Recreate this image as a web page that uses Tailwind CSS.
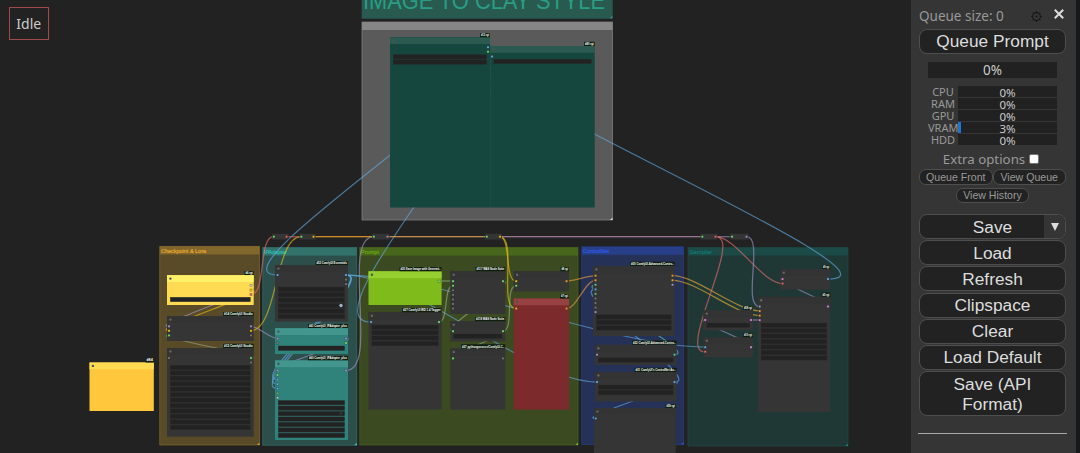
<!DOCTYPE html>
<html lang="en">
<head>
    <meta charset="UTF-8">
    <meta name="viewport" content="width=device-width, initial-scale=1.0">
    <title>ComfyUI</title>
    <script src="https://cdn.jsdelivr.net/npm/@tailwindcss/browser@4"></script>
</head>
<body class="flex w-[1080px] h-[453px] overflow-hidden bg-[#222222] font-['Noto_Sans',sans-serif]">
    <main class="relative w-[911px] h-[453px] shrink-0 overflow-hidden">
        <svg id="graph" class="block" width="911" height="453" viewBox="0 0 911 453" font-family="Liberation Sans, Arial, sans-serif"></svg>
        <div class="absolute left-[9px] top-[7px] w-[39.5px] h-[33px] border border-[#a04a4a] flex items-center justify-center text-[14px] leading-none text-[#cccccc]">Idle</div>
    </main>

    <aside class="w-[165px] h-[453px] shrink-0 bg-[#353535] pl-[7px] pr-[9px] flex flex-col items-center text-[#999999]">
        <div class="w-full h-[29px] shrink-0 flex items-center pt-[4px] pl-[1px]">
            <span class="text-[13.5px] leading-none whitespace-nowrap w-[112px]">Queue size: 0</span>
            <svg class="w-[11px] h-[11px] shrink-0" viewBox="0 0 11 11" fill="none" stroke="#161616">
                <circle cx="5.5" cy="5.5" r="3.9" stroke-width="1.1"/>
                <circle cx="5.5" cy="5.5" r="1" fill="#161616" stroke="none"/>
                <path d="M5.5 0v1.6M5.5 9.4V11M0 5.5h1.6M9.4 5.5H11M1.6 1.6l1.1 1.1M8.3 8.3l1.1 1.1M9.4 1.6L8.3 2.7M2.7 8.3L1.6 9.4" stroke-width="1"/>
            </svg>
            <svg class="w-[10px] h-[10px] shrink-0 ml-[12px] -mt-[5px]" viewBox="0 0 10 10" fill="none" stroke="#dddddd" stroke-width="2">
                <path d="M0.8 0.8L9.2 9.2M9.2 0.8L0.8 9.2"/>
            </svg>
        </div>
        <button class="w-[147px] h-[25px] shrink-0 rounded-lg border border-[#4e4e4e] bg-[#222222] text-[#dddddd] font-['Liberation_Sans',sans-serif] text-[17.3px] leading-none">Queue Prompt</button>

        <div class="mt-[8px] w-[129px] h-[16px] shrink-0 bg-[#212121] text-[#cccccc] text-[13.5px] leading-[17px] text-center">0%</div>

        <div class="mt-[8px] w-[129px] shrink-0 flex flex-col text-[11px] leading-[12px]">
            <div class="flex h-[12px]"><span class="w-[30px] text-center">CPU</span><span class="w-[99px] h-[11px] pt-[1px] bg-[#212121] text-[#cccccc] text-center text-[11.5px]">0%</span></div>
            <div class="flex h-[12px]"><span class="w-[30px] text-center">RAM</span><span class="w-[99px] h-[11px] pt-[1px] bg-[#212121] text-[#cccccc] text-center text-[11.5px]">0%</span></div>
            <div class="flex h-[12px]"><span class="w-[30px] text-center">GPU</span><span class="w-[99px] h-[11px] pt-[1px] bg-[#212121] text-[#cccccc] text-center text-[11.5px]">0%</span></div>
            <div class="flex h-[12px]"><span class="w-[30px] text-center">VRAM</span><span class="w-[99px] h-[11px] pt-[1px] bg-[#212121] bg-linear-to-r from-[#1976d2] from-[3px] to-[#212121] to-[3px] text-[#cccccc] text-center text-[11.5px]">3%</span></div>
            <div class="flex h-[12px]"><span class="w-[30px] text-center">HDD</span><span class="w-[99px] h-[11px] pt-[1px] bg-[#212121] text-[#cccccc] text-center text-[11.5px]">0%</span></div>
        </div>

        <label class="mt-[6px] mr-[3px] h-[16px] shrink-0 flex items-center gap-[4px] text-[13.3px] leading-none whitespace-nowrap">Extra options<span class="w-[10px] h-[10px] bg-white rounded-[2px] border border-[#777777] -mt-[3px]"></span></label>
        <div class="mt-[1px] w-[147px] shrink-0 flex flex-wrap justify-center gap-y-[3px] font-['Liberation_Sans',sans-serif] text-[10.6px] leading-none">
            <button class="w-[73.5px] h-[16px] rounded-[7px] border border-[#4e4e4e] bg-[#222222] whitespace-nowrap">Queue Front</button>
            <button class="w-[73.5px] h-[16px] rounded-[7px] border border-[#4e4e4e] bg-[#222222] whitespace-nowrap">View Queue</button>
            <button class="w-[73px] h-[15px] rounded-[7px] border border-[#4e4e4e] bg-[#222222] whitespace-nowrap">View History</button>
        </div>

        <div class="mt-[11px] w-[147px] shrink-0 flex flex-col gap-[1.2px] text-[#dddddd] font-['Liberation_Sans',sans-serif] text-[17.3px] leading-[20px]">
            <div class="h-[25px] flex rounded-lg border border-[#4e4e4e] bg-[#222222] overflow-hidden">
                <button class="flex-1 pl-[21px]">Save</button>
                <button class="w-[21px] bg-[#353535] flex items-center justify-center">
                    <svg class="w-[8px] h-[8px]" viewBox="0 0 8 8" fill="#dddddd"><path d="M0 0h8L4 8z"/></svg>
                </button>
            </div>
            <button class="h-[25px] rounded-lg border border-[#4e4e4e] bg-[#222222]">Load</button>
            <button class="h-[25px] rounded-lg border border-[#4e4e4e] bg-[#222222]">Refresh</button>
            <button class="h-[25px] rounded-lg border border-[#4e4e4e] bg-[#222222]">Clipspace</button>
            <button class="h-[25px] rounded-lg border border-[#4e4e4e] bg-[#222222]">Clear</button>
            <button class="h-[25px] rounded-lg border border-[#4e4e4e] bg-[#222222]">Load Default</button>
            <button class="h-[45px] rounded-lg border border-[#4e4e4e] bg-[#222222]">Save (API<br>Format)</button>
        </div>
        <hr class="mt-[17px] w-[149px] shrink-0 border-t-[1.5px] border-[#a8a8a8]">
    </aside>
    <div class="w-[4px] h-[453px] bg-[#15191b]"></div>

    <script>
        const B = '#64a9e0', G = '#6fdc6f', Y = '#e8c01a', O = '#eca042', P = '#a694cc', K = '#d58ad8', R = '#ea6d6d', N = '#77777f', T = '#58cfa0';

        // x, y, right, bottom, header bottom, body, header, title, title colour, title width, corner mark
        const groups = [
            [362, -10, 612.3, 18.3, -10, '#285a50', '#285a50', '', '', 0, '#2a9d84'],
            [362, 22, 612.5, 220, 30, '#5a5a5a', '#868686', '', '', 0, '#dddddd'],
            [159.8, 246.3, 259.5, 445, 254.5, '#5a4b28', '#82672c', 'Checkpoint & Lora', '#e3a730', 45, '#d8a030'],
            [262.8, 247.6, 356.8, 445.2, 255.6, '#2c4f4c', '#33716b', 'IPAdapter', '#2bbdab', 23, '#30d0c0'],
            [359.8, 247.6, 578, 445, 255.6, '#3b4a20', '#48661c', 'Prompt', '#68a812', 18, '#78c018'],
            [581.8, 246.8, 683.6, 444.6, 254.8, '#263158', '#273f88', 'ControlNet', '#3159e0', 26, '#3159e0'],
            [688, 247.6, 848, 446, 255.6, '#1f3836', '#1b4a47', 'Sampler', '#12786f', 23, '#12887f']
        ];

        const links = [
            [488, 47, 277.5, 275, B], [488, 47, 371, 322, B], [828, 279, 492, 56.5, B],
            [251, 294.5, 273.5, 236.7, R], [251, 330.5, 301, 236.7, Y], [251, 326.5, 277.5, 338.5, P],
            [251, 285.5, 169, 326.5, P], [251, 290, 169, 330.5, Y], [251, 358, 169, 335.5, '#9aa888'],
            [346, 370.5, 374, 236.7, P], [346, 338.5, 277.5, 370.5, P],
            [346, 275, 277.5, 379.5, B], [346, 275, 277.5, 384, B], [346, 275, 277.5, 388.5, B],
            [346, 275, 705, 347, B], [346, 275, 597, 382, B],
            [286.5, 236.7, 301, 236.7, R], [313.5, 236.7, 374, 236.7, '#f0a020'], [313.5, 236.7, 374, 236.7, '#e8a030'],
            [388, 236.7, 487, 236.7, '#f0a040'], [388, 236.7, 487, 236.7, '#d09a60'],
            [499.5, 236.7, 702.5, 236.7, '#b87fae'], [499.5, 236.7, 702.5, 236.7, '#a87f9e'], [715.5, 236.7, 732, 236.7, P],
            [439, 281, 453, 281, '#9ab088'], [439, 322, 453, 285.5, '#9ab088'], [503, 331, 516, 285.5, '#9ab088'],
            [503, 281, 453, 331, '#9ab088'], [503, 331, 453, 358.5, '#9ab088'],
            [499.5, 236.7, 516, 281, Y], [499.5, 236.7, 516, 308.5, Y],
            [566.5, 281, 595.5, 275.7, O], [566.5, 308.5, 595.5, 280.3, O],
            [674.5, 354.5, 595.5, 285, T], [674.5, 382, 595.5, 289.5, B], [674.5, 382, 595.5, 418.5, B],
            [672.5, 275.7, 759.5, 310.8, '#f0b030'], [672.5, 280.3, 759.5, 315.5, '#f0b030'],
            [715.5, 236.7, 705, 352, R], [715.5, 236.7, 782.5, 283.5, R], [746.5, 236.7, 759.5, 306.5, P],
            [751, 320, 759.5, 320, K], [751, 347, 705, 320, P], [828, 306.5, 782.5, 279, P]
        ];

        // w: first widget y, count, step; ports: x, first y, colours
        const nodes = [
            { x: 390, y: 37.3, r: 490, b: 207.5, c: '#16473e', h: '#2a5a50', tag: '#12 rgt', tx: 480, w: [54.6, 2, 5.2], ports: [[488, 47.2, B, G]] },
            { x: 490.2, y: 46, r: 594.7, b: 207.5, c: '#16473e', h: '#2a5a50', tag: '#80 rgt', tx: 584, w: [59.2, 1], ports: [[492, 56.5, B]] },
            { x: 89.5, y: 362.5, r: 153.8, b: 411, c: '#ffc83c', h: '#ffdb54', tag: '#84', tx: 145.5, ports: [] },
            { x: 167, y: 275.2, r: 253.7, b: 305, c: '#ffdb54', h: '#fff068', tag: '#6 rgt', tx: 244.5, w: [297.3, 1], ports: [[251, 285.5, '#d4c9bb', Y, R]] },
            { x: 167, y: 316.2, r: 253.7, b: 341, tag: '#14 ComfyUI Studio', tx: 223, ports: [[169, 326.3, P, Y, G], [251, 326.3, P, Y, N]] },
            { x: 167, y: 348, r: 253.7, b: 436.7, tag: '#15 ComfyUI Studio', tx: 223, w: [365.2, 12], ports: [[169, 358, N], [251, 358, G, N]] },
            { x: 275, y: 265.2, r: 348, b: 321.6, tag: '#53 ComfyUI Essentials', tx: 315.5, w: [287, 6], ports: [[277.5, 275, B], [346, 275, B, N, N]], dot: [341, 305.5, '#9eb4c8'] },
            { x: 275, y: 328.2, r: 348, b: 354, c: '#2f837b', h: '#43968e', tag: '#61 ComfyUI_IPAdapter_plus', tx: 308, w: [346, 1], ports: [[277.5, 338.5, P, N], [346, 338.5, P, G]] },
            { x: 275, y: 360.4, r: 348, b: 440, c: '#2f837b', h: '#43968e', tag: '#60 ComfyUI_IPAdapter_plus', tx: 308, w: [400.5, 7], ports: [[277.5, 370.5, P, G, B, B, B, '#71b46a', '#c5c5c5'], [346, 370.5, P]], dot: [341, 413.6, '#333333'] },
            { x: 368.5, y: 271.3, r: 441.6, b: 305, c: '#7fbb1b', h: '#95cf30', tag: '#20 Save Image with Generati..', tx: 399.5, ports: [[439, 281.2, G]] },
            { x: 368.5, y: 312.3, r: 441.6, b: 409.6, tag: '#27 ComfyUI WD 1.4 Tagger', tx: 402, w: [325, 4], ports: [[371, 322, B], [439, 322, G]] },
            { x: 450.3, y: 271.3, r: 505.3, b: 314, tag: '#117 WAS Node Suite', tx: 475.5, ports: [[453, 281.2, G, G, N, N, N, N, N], [503, 281.2, G]] },
            { x: 450.3, y: 321.3, r: 505.3, b: 341.4, tag: '#119 WAS Node Suite', tx: 475, w: [334, 1], ports: [[453, 331.2, G], [503, 331.2, G]] },
            { x: 450.3, y: 348.6, r: 505.3, b: 409.6, tag: '#37 pythongosssss/ComfyUI-C..', tx: 461, ports: [[453, 358.4, G], [503, 358.4, N]] },
            { x: 513.7, y: 271.3, r: 569, b: 291.5, tag: '#8 rgt', tx: 560.5, ports: [[516.2, 281.2, Y, G], [566.5, 281.2, O]] },
            { x: 513.7, y: 298.5, r: 569, b: 409.6, c: '#7c2a2c', h: '#984143', tag: '#7 rgt', tx: 560, ports: [[516.2, 308.5, Y], [566.5, 308.5, O]] },
            { x: 593, y: 266, r: 674.7, b: 336, tag: '#30 ComfyUI-Advanced-Contro..', tx: 630, w: [314.8, 3], ports: [[595.5, 275.7, O, O, T, B, '#71b46a', N, N, N, P], [672.5, 275.7, O, O, P]] },
            { x: 595, y: 344.8, r: 676.5, b: 365, tag: '#32 ComfyUI-Advanced-Contro..', tx: 632, w: [357.8, 1], ports: [[597, 354.7, P], [674.5, 354.7, T]] },
            { x: 595, y: 372, r: 676.5, b: 401.5, tag: '#31 ComfyUI\'s ControlNet Au..', tx: 634.5, w: [385, 2], ports: [[597, 382, B], [674.5, 382, B]] },
            { x: 594, y: 408.2, r: 675.8, b: 460, tag: '#59 rgt', tx: 665.5, ports: [[595.7, 418.4, B]] },
            { x: 780.4, y: 269.2, r: 830.3, b: 289.5, tag: '#9 rgt', tx: 822, ports: [[782.5, 279, K, R], [828, 279, B]] },
            { x: 757.8, y: 296.8, r: 830.3, b: 412, tag: '#5 rgt', tx: 821.5, w: [323, 7], ports: [[759.7, 306.5, P, O, O, K], [828, 306.5, K]] },
            { x: 703.4, y: 310.2, r: 753, b: 330.3, tag: '#58 rgt', tx: 743, w: [323, 1], ports: [[705.2, 320, K], [751, 320, K]] },
            { x: 703.4, y: 337.4, r: 753, b: 357.4, tag: '#10 rgt', tx: 743, ports: [[705.2, 347.2, B, R], [751, 347.2, K]] }
        ];

        // x, right, output colour
        const reroutes = [[272, 288.5, R], [299.5, 315.5, Y], [372, 389.5, P], [485, 502, Y], [700.5, 717.5, R], [730.3, 748.5, P]];

        const rect = (x, y, r, b, fill, extra = '') => `<rect x="${x}" y="${y}" width="${r - x}" height="${b - y}" fill="${fill}" ${extra}/>`;
        const port = (x, y, c) => rect(x - 1.1, y - 1.1, x + 1.1, y + 1.1, c, 'stroke="#151515" stroke-opacity="0.45" stroke-width="0.5"');
        const esc = s => s.replace(/&/g, '&amp;');
        let out = '';

        for (const [x, y, r, b, hb, c, h, title, tc, tw, corner] of groups) {
            out += rect(x, y, r, b, c, `stroke="${h}" stroke-width="0.7"`) + rect(x, y, r, hb, h);
            out += `<path d="M${r} ${b}v-2.5l-2.5 2.5z" fill="${corner}"/>`;
            if (title) out += `<text x="${x + 1.2}" y="${hb - 1.7}" font-size="5.8" fill="${tc}" stroke="${tc}" stroke-width="0.2" textLength="${tw}" lengthAdjust="spacingAndGlyphs">${esc(title)}</text>`;
        }
        out += '<text x="363" y="9" font-size="23" fill="#2a9d84" textLength="242" lengthAdjust="spacingAndGlyphs">IMAGE TO CLAY STYLE</text>';

        for (const [x1, y1, x2, y2, c] of links) {
            const d = Math.hypot(x2 - x1, y2 - y1) * 0.25;
            out += `<path d="M${x1} ${y1}C${x1 + d} ${y1} ${x2 - d} ${y2} ${x2} ${y2}" fill="none" stroke="${c}" stroke-width="1.25" stroke-opacity="0.62"/>`;
        }

        for (const [x, r, c] of reroutes) {
            out += rect(x, 233.8, r, 239.5, '#353535') + port(x + 1.8, 236.7, G) + port(r - 2, 236.7, c);
        }

        for (const n of nodes) {
            out += rect(n.x, n.y, n.r, n.b, n.c || '#353535') + rect(n.x, n.y, n.r, n.y + 6.8, n.h || '#333333');
            out += `<circle cx="${n.x + 3.4}" cy="${n.y + 3.4}" r="1.2" fill="${n.h ? '#4a5450' : '#666666'}"/>`;
            if (n.w) {
                const [wy, count, step = 5.45] = n.w;
                for (let i = 0; i < count; i++) out += rect(n.x + 3.3, wy + i * step, n.r - 3.4, wy + i * step + 4.4, '#222222', 'stroke="#2c2c2c" stroke-width="0.4"');
            }
            if (n.dot) out += `<circle cx="${n.dot[0]}" cy="${n.dot[1]}" r="1.7" fill="${n.dot[2]}"/>`;
            for (const [px, py, ...colors] of n.ports) colors.forEach((c, i) => out += port(px, py + i * 4.55, c));
            out += rect(n.tx, n.y - 4.3, n.r, n.y - 0.1, '#0f1f0f', 'rx="0.5"');
            out += `<text x="${n.tx + 1}" y="${n.y - 1.1}" font-size="3" font-weight="bold" fill="#ffffff" textLength="${n.r - n.tx - 2}" lengthAdjust="spacingAndGlyphs">${n.tag}</text>`;
        }
        document.getElementById('graph').innerHTML = out;
    </script>
</body>
</html>
